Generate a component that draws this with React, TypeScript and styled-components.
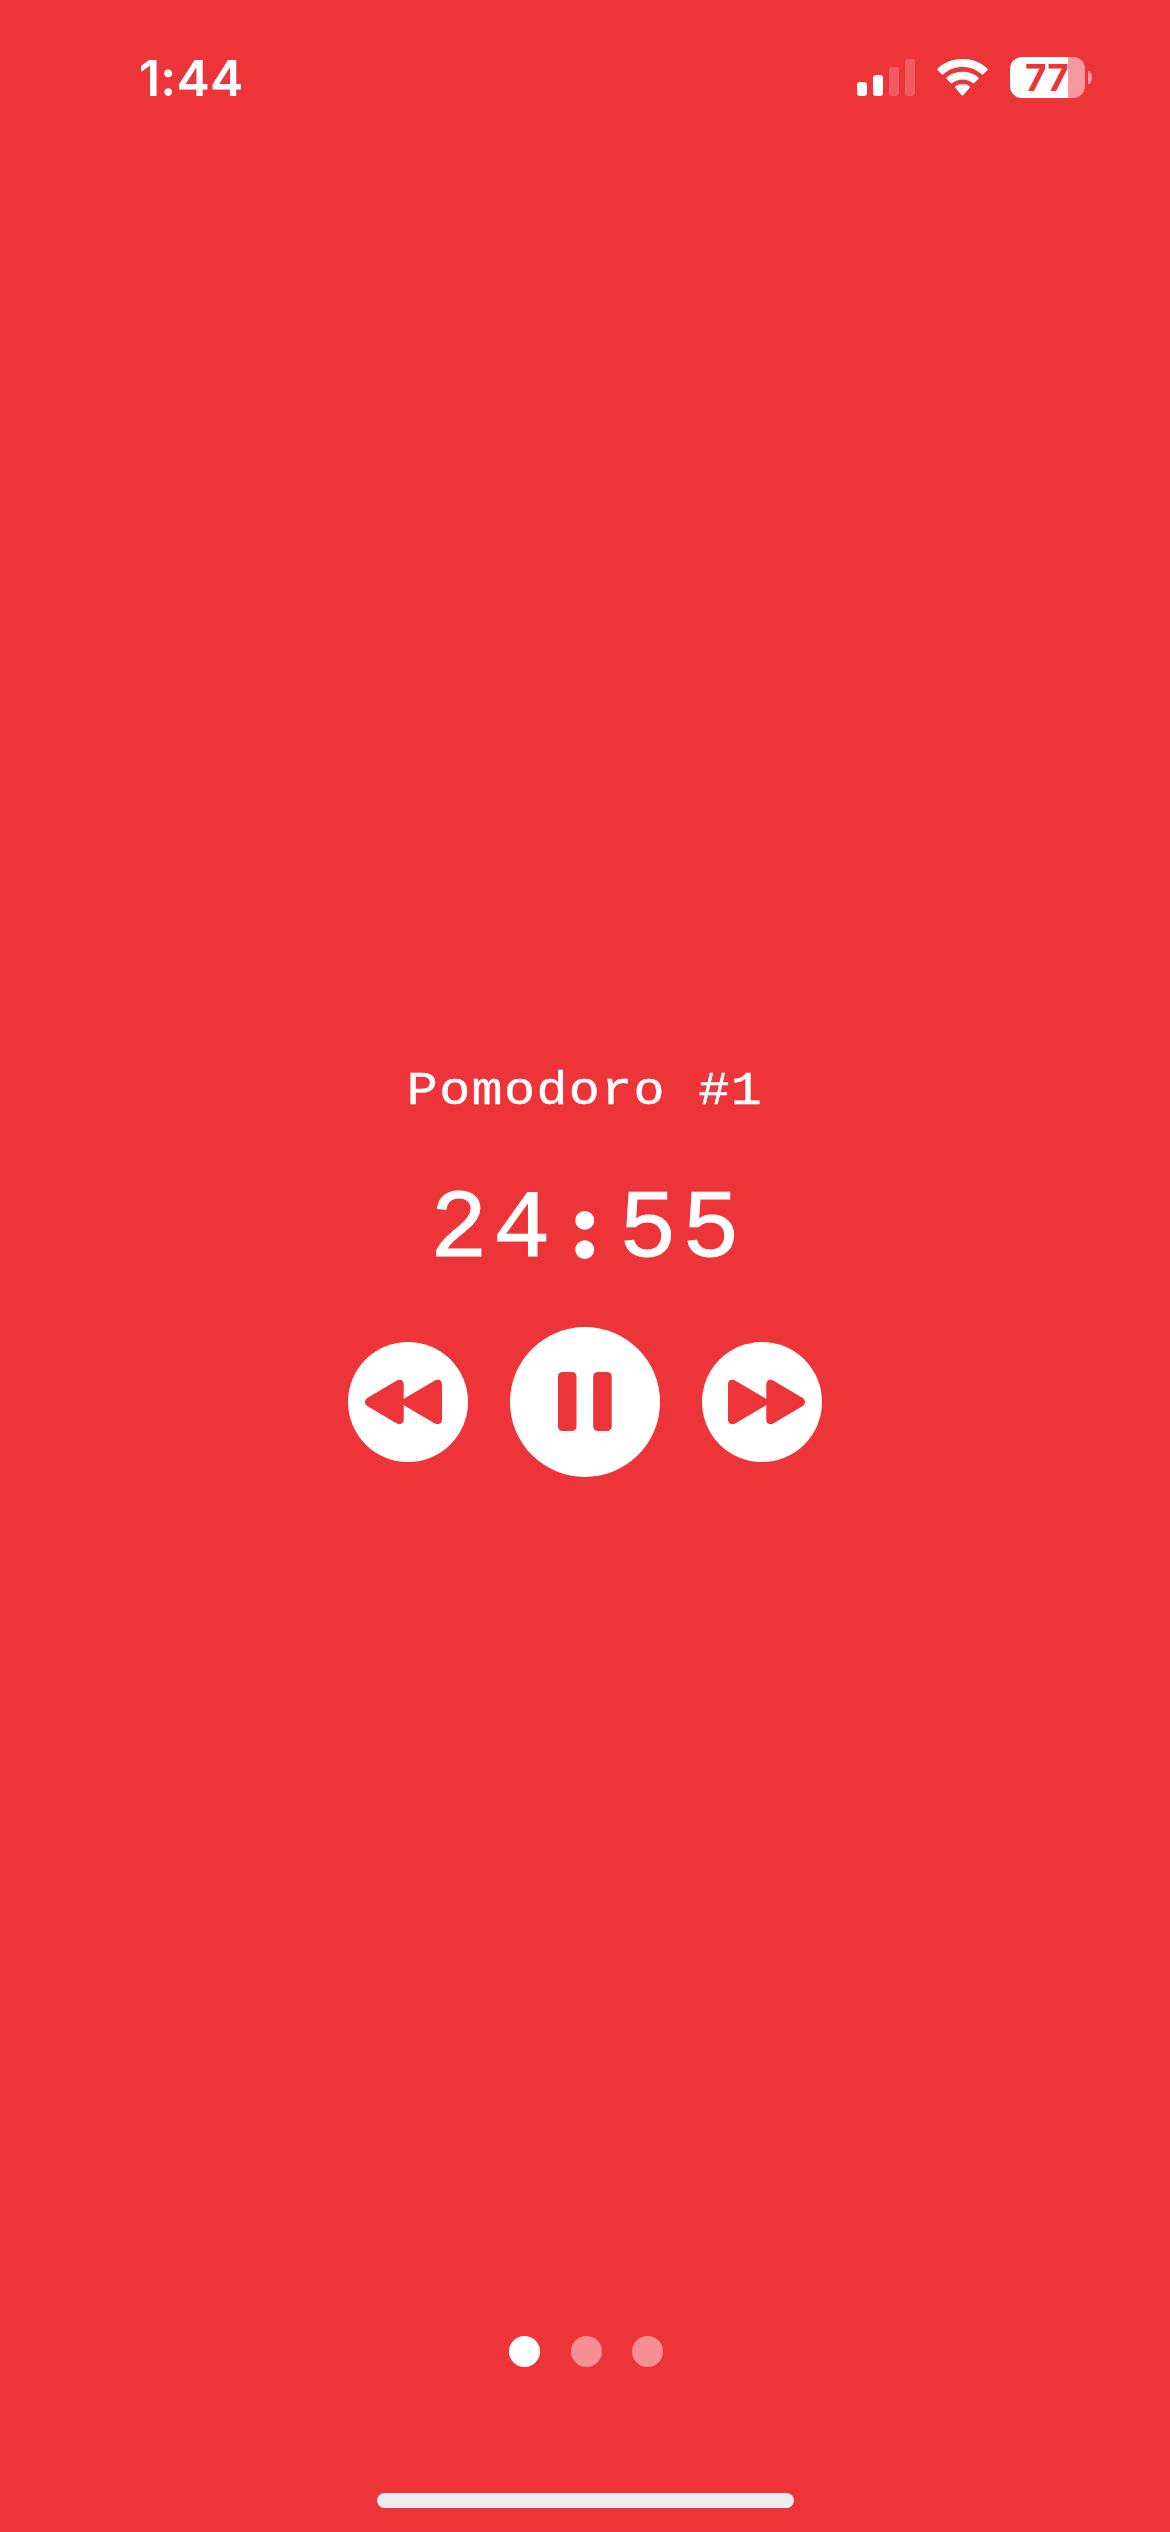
import React from "react";
import styled, { createGlobalStyle } from "styled-components";

const RED = "#ed3439";

const GlobalStyle = createGlobalStyle`
  body { margin: 0; background: ${RED}; }
`;

const Screen = styled.main`
  width: 1170px;
  height: 2532px;
  box-sizing: border-box;
  display: flex;
  flex-direction: column;
  align-items: center;
  overflow: hidden;
  background: ${RED};
  color: #fff;
`;

const StatusBar = styled.header`
  width: 100%;
  height: 155px;
  flex: none;
  box-sizing: border-box;
  padding: 57px 78px 0 139px;
  display: flex;
  justify-content: space-between;
  align-items: flex-start;
`;

const Clock = styled.time`
  font: 600 50px/42px Inter, sans-serif;
  letter-spacing: 0.2px;
`;

const StatusIcons = styled.div`
  display: flex;
  align-items: center;
  height: 41px;
`;

const Signal = styled.svg`
  width: 58px;
  height: 41px;
  margin-right: 22px;
`;

const Wifi = styled.svg`
  width: 51px;
  height: 41px;
  margin-right: 22px;
`;

const Battery = styled.div`
  display: flex;
  align-items: center;
  gap: 3px;
`;

const BatteryBody = styled.div<{ $level: number }>`
  width: 75px;
  height: 41px;
  box-sizing: border-box;
  padding-left: 15px;
  border-radius: 12px;
  background: linear-gradient(90deg, #fff ${(p) => p.$level}%, #f6999c ${(p) => p.$level}%);
  color: ${RED};
  font: 700 37px/41px Inter, sans-serif;
  letter-spacing: 0;
`;

const BatteryTip = styled.div`
  width: 4px;
  height: 13px;
  border-radius: 0 4px 4px 0 / 0 7px 7px 0;
  background: #f6999c;
`;

const Timer = styled.section`
  margin-top: 907px;
  display: flex;
  flex-direction: column;
  align-items: center;
`;

const Title = styled.h1`
  margin: 0;
  font: 400 47px/60px "Liberation Mono", monospace;
  letter-spacing: 1.25px;
  white-space: pre;
  transform: scaleX(1.1);
  -webkit-text-stroke: 0.4px #fff;
`;

const Remaining = styled.div`
  margin-top: 54px;
  height: 110px;
  font: 400 96px/110px "Liberation Mono", monospace;
  letter-spacing: 5.4px;
  padding-left: 5px;
  -webkit-text-stroke: 1px #fff;
`;

const Colon = styled.span`
  display: inline-block;
  width: 63px;
  text-align: center;
  letter-spacing: 0;
  text-indent: -5px;
  font: 700 92px/80px "Liberation Serif", serif;
  -webkit-text-stroke: 4px #fff;
`;

const Controls = styled.div`
  margin-top: 41px;
  display: flex;
  align-items: center;
  gap: 42px;
`;

const RoundButton = styled.button<{ $size: number }>`
  width: ${(p) => p.$size}px;
  height: ${(p) => p.$size}px;
  padding: 0;
  border: 0;
  border-radius: 50%;
  background: #fff;
  display: block;

  svg {
    display: block;
    width: 100%;
    height: 100%;
    fill: ${RED};
  }
`;

const Pager = styled.nav`
  margin-top: auto;
  padding-left: 2px;
  display: flex;
  gap: 30.5px;
`;

const Dot = styled.span<{ $active?: boolean }>`
  width: 31px;
  height: 31px;
  border-radius: 50%;
  background: ${(p) => (p.$active ? "#fff" : "#f58f92")};
`;

const HomeIndicator = styled.div`
  width: 417px;
  height: 15px;
  flex: none;
  margin: 126px 0 24px 1px;
  border-radius: 8px;
  background: #ececec;
`;

const SkipGlyph = () => (
  <path d="M26 42.500C26 38.200 29.500 36.500 34 39L62.500 55.700Q64 56.600 64.300 57.200V42.500C64.300 38.200 68 36.500 72 39L99.500 55.200C104.300 58 104.300 62 99.500 64.800L72 81C68 83.500 64.300 81.800 64.300 77.500V62.800Q64 63.400 62.500 64.300L34 81C29.500 83.500 26 81.800 26 77.500Z" />
);

export default function App() {
  return (
    <Screen>
      <GlobalStyle />
      <StatusBar>
        <Clock>1:44</Clock>
        <StatusIcons>
          <Signal viewBox="0 0 58 41" fill="#fff">
            <rect x="0" y="25" width="10" height="14" rx="3" />
            <rect x="16" y="18" width="10" height="21" rx="3" />
            <rect x="32" y="10" width="10" height="29" rx="3" opacity=".2" />
            <rect x="48" y="2" width="10" height="37" rx="3" opacity=".2" />
          </Signal>
          <Wifi viewBox="0 0 51 41" fill="#fff">
            <path d="M.7 13.200Q-.2 12.300.7 11.400C14-1.200 37-1.200 50.300 11.400Q51.200 12.300 50.300 13.200L46.200 17.300Q45.500 18 44.800 17.300C34.200 7.500 16.800 7.500 6.200 17.300Q5.500 18 4.800 17.300Z" />
            <path d="M9.700 22Q8.800 21.100 9.700 20.200C18.300 12.800 32.700 12.800 41.300 20.200Q42.200 21.100 41.300 22L37.200 26.100Q36.500 26.700 35.700 26.100C30 21.200 21 21.200 15.300 26.100Q14.500 26.700 13.800 26.100Z" />
            <path d="M18.300 30.800Q17.400 30 18.400 29.200C22.500 26.400 28.500 26.400 32.600 29.200Q33.600 30 32.700 30.800L26.300 38.200Q25.500 39 24.700 38.200Z" />
          </Wifi>
          <Battery>
            <BatteryBody $level={77.3}>77</BatteryBody>
            <BatteryTip />
          </Battery>
        </StatusIcons>
      </StatusBar>
      <Timer>
        <Title>Pomodoro #1</Title>
        <Remaining>
          24<Colon>:</Colon>55
        </Remaining>
        <Controls>
          <RoundButton $size={120} aria-label="Previous">
            <svg viewBox="0 0 120 120">
              <g transform="matrix(-1 0 0 1 120 0)">
                <SkipGlyph />
              </g>
            </svg>
          </RoundButton>
          <RoundButton $size={150} aria-label="Pause">
            <svg viewBox="0 0 150 150">
              <rect x="48" y="45" width="18.500" height="59" rx="4.500" />
              <rect x="83.200" y="45" width="18.500" height="59" rx="4.500" />
            </svg>
          </RoundButton>
          <RoundButton $size={120} aria-label="Next">
            <svg viewBox="0 0 120 120">
              <SkipGlyph />
            </svg>
          </RoundButton>
        </Controls>
      </Timer>
      <Pager>
        <Dot $active />
        <Dot />
        <Dot />
      </Pager>
      <HomeIndicator />
    </Screen>
  );
}
